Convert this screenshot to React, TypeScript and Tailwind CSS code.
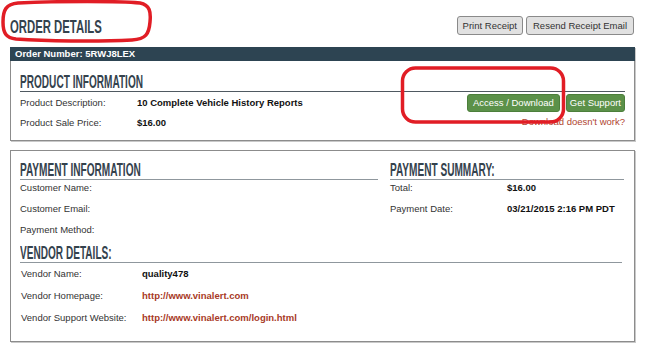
import React from "react";

const headFont = "font-['Liberation_Sans',Arial,sans-serif]";

function Heading({
  children,
  h,
  line,
}: {
  children: React.ReactNode;
  h: string;
  line: string;
}) {
  return (
    <div className={`${h} ${line} flex items-end border-b`}>
      <span
        className={`inline-block origin-bottom-left scale-x-[0.56] whitespace-nowrap text-[18px] leading-none font-bold text-[#34424d] ${headFont}`}
      >
        {children}
      </span>
    </div>
  );
}

function Row({
  label,
  value,
  lw,
  cls,
  valueCls,
}: {
  label: string;
  value?: string;
  lw: string;
  cls: string;
  valueCls?: string;
}) {
  return (
    <div className={`flex ${cls}`}>
      <div className={`${lw} shrink-0 text-[#333]`}>{label}</div>
      {value ? (
        <div className={valueCls ?? "font-bold text-[#111]"}>{value}</div>
      ) : null}
    </div>
  );
}

export default function App() {
  return (
    <div className="relative w-[645px] h-[343px] overflow-hidden bg-white font-['Liberation_Sans',Arial,sans-serif] text-[9.5px] text-[#333]">
      {/* header */}
      <div className="flex h-[47px] items-start justify-between pl-[10px] pr-[11px]">
        <div className="pt-[18px]">
          <span
            className={`inline-block origin-bottom-left scale-x-[0.63] whitespace-nowrap text-[18px] leading-none font-bold text-[#34424d] ${headFont}`}
          >
            ORDER DETAILS
          </span>
        </div>
        <div className="mt-[16px] flex gap-[3px]">
          <button className="h-[19px] rounded-[3px] border border-[#8a8a8a] bg-[#e1e1e1] px-[5px] text-[9.5px] leading-none text-[#333]">
            Print Receipt
          </button>
          <button className="h-[19px] rounded-[3px] border border-[#8a8a8a] bg-[#e1e1e1] px-[6px] text-[9.5px] leading-none text-[#333]">
            Resend Receipt Email
          </button>
        </div>
      </div>

      {/* product box */}
      <div className="mx-[10px] shadow-[1px_1px_0_#c9c9c9]">
        <div className="h-[14px] bg-[#2d4452] pl-[5px] text-[9.5px] font-bold leading-[14px] text-white">
          Order Number: 5RWJ8LEX
        </div>
        <div className="border border-t-0 border-[#8c8c8c] px-[9px] pb-[7px]">
          <Heading h="h-[31px]" line="border-[#4f5961]">
            PRODUCT INFORMATION
          </Heading>
          <div className="mt-[1px] flex justify-between">
            <div>
              <Row
                cls="h-[20px] leading-[20px]"
                lw="w-[117px]"
                label="Product Description:"
                value="10 Complete Vehicle History Reports"
              />
              <Row
                cls="h-[20px] leading-[20px]"
                lw="w-[117px]"
                label="Product Sale Price:"
                value="$16.00"
              />
            </div>
            <div className="flex flex-col items-end">
              <div className="mt-[1px] flex gap-[6px]">
                <button className="h-[18px] rounded-[3px] border border-[#4c7f3b] bg-[#5b9149] px-[5px] text-[9.5px] leading-none text-white">
                  Access / Download
                </button>
                <button className="h-[18px] rounded-[3px] border border-[#4c7f3b] bg-[#5b9149] px-[3px] text-[9.5px] leading-none text-white">
                  Get Support
                </button>
              </div>
              <div className="leading-[20px] text-[#b0452f]">
                Download doesn't work?
              </div>
            </div>
          </div>
        </div>
      </div>

      {/* payment box */}
      <div className="mx-[10px] mt-[9px] h-[192px] border border-[#8c8c8c] px-[9px] shadow-[1px_1px_0_#c9c9c9]">
        <div className="flex gap-[12px]">
          <div className="w-[358px]">
            <Heading h="h-[29px]" line="border-[#8f979d]">
              PAYMENT INFORMATION
            </Heading>
            <Row cls="h-[21px] leading-[16px]" lw="w-[117px]" label="Customer Name:" />
            <Row cls="h-[21px] leading-[16px]" lw="w-[117px]" label="Customer Email:" />
            <Row cls="h-[21px] leading-[16px]" lw="w-[117px]" label="Payment Method:" />
          </div>
          <div className="w-[234px]">
            <Heading h="h-[29px]" line="border-[#8f979d]">
              PAYMENT SUMMARY:
            </Heading>
            <Row
              cls="h-[21px] leading-[16px]"
              lw="w-[117px]"
              label="Total:"
              value="$16.00"
            />
            <Row
              cls="h-[21px] leading-[16px]"
              lw="w-[117px]"
              label="Payment Date:"
              value="03/21/2015 2:16 PM PDT"
            />
          </div>
        </div>
        <div className="mr-[3px]">
          <Heading h="h-[20px]" line="border-[#8f979d]">
            VENDOR DETAILS:
          </Heading>
          <div className="pl-[1px]">
            <Row
              cls="h-[22px] leading-[22px]"
              lw="w-[121px]"
              label="Vendor Name:"
              value="quality478"
            />
            <Row
              cls="h-[22px] leading-[22px]"
              lw="w-[121px]"
              label="Vendor Homepage:"
              value="http://www.vinalert.com"
              valueCls="font-bold text-[#a83a26]"
            />
            <Row
              cls="h-[22px] leading-[22px]"
              lw="w-[121px]"
              label="Vendor Support Website:"
              value="http://www.vinalert.com/login.html"
              valueCls="font-bold text-[#a83a26]"
            />
          </div>
        </div>
      </div>

      {/* red annotations */}
      <svg
        className="pointer-events-none absolute left-0 top-0"
        width={645}
        height={343}
        viewBox="0 0 645 343"
      >
        <path
          d="M18 3 C60 1 120 1 140 3 C150 5 151 12 150 22 C149 34 146 39 132 40 C95 42 45 41 16 39 C6 38 3 33 3 22 C3 10 6 4 18 3 Z"
          fill="none"
          stroke="#e11d25"
          strokeWidth={3.5}
        />
        <rect
          x={402.5}
          y={68}
          width={161}
          height={54}
          rx={13}
          fill="none"
          stroke="#e11d25"
          strokeWidth={3.5}
        />
      </svg>
    </div>
  );
}
